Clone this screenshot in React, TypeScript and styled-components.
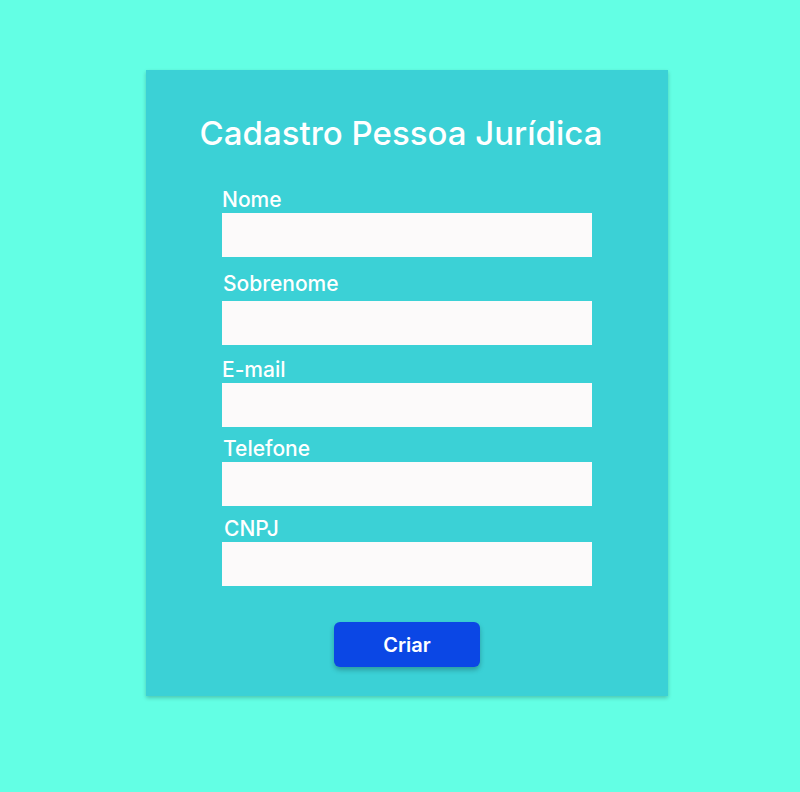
import React from "react";
import styled, { createGlobalStyle } from "styled-components";

const Global = createGlobalStyle`
  html, body { margin: 0; padding: 0; background: #63ffe4; }
  body { font-family: Inter, "Noto Sans", sans-serif; min-height: 792px; }
`;

const Page = styled.div`
  padding: 70px 0 0 146px;
`;

const Card = styled.form`
  box-sizing: border-box;
  width: 522px;
  height: 626px;
  background: #3bd1d6;
  box-shadow: 0 2px 4px rgba(0, 0, 0, 0.22);
  padding: 45px 76px 0 76px;
  display: flex;
  flex-direction: column;
`;

const Title = styled.h1`
  margin: 0 -48px 0 -60px;
  font-size: 33px;
  line-height: 36px;
  font-weight: 500;
  color: #ffffff;
  text-align: center;
  white-space: nowrap;
`;

const Field = styled.label<{ $top: number }>`
  display: flex;
  flex-direction: column;
  margin-top: ${(p) => p.$top}px;
`;

const LabelText = styled.span<{ $shift?: number; $gap?: number }>`
  font-size: 21px;
  line-height: 22px;
  font-weight: 500;
  color: #ffffff;
  padding-left: ${(p) => p.$shift ?? 0}px;
  margin-bottom: ${(p) => p.$gap ?? 2}px;
`;

const Input = styled.input`
  box-sizing: border-box;
  width: 370px;
  height: 44px;
  border: none;
  outline: none;
  background: #fcfafa;
  margin: 0;
  padding: 0 10px;
  font-family: inherit;
  font-size: 16px;
`;

const Actions = styled.div`
  display: flex;
  justify-content: center;
  margin-top: 36px;
`;

const Button = styled.button`
  width: 146px;
  height: 45px;
  border: none;
  border-radius: 6px;
  background: #0b47e5;
  color: #ffffff;
  font-family: inherit;
  font-size: 20px;
  font-weight: 600;
  box-shadow: 0 3px 5px rgba(0, 0, 0, 0.25);
  cursor: pointer;
`;

const fields = [
  { label: "Nome", top: 38, shift: 0, gap: 2 },
  { label: "Sobrenome", top: 16, shift: 1, gap: 6 },
  { label: "E-mail", top: 14, shift: 0, gap: 2 },
  { label: "Telefone", top: 11, shift: 1, gap: 2 },
  { label: "CNPJ", top: 12, shift: 2, gap: 2 },
];

export default function App() {
  return (
    <>
      <Global />
      <Page>
        <Card onSubmit={(e) => e.preventDefault()}>
          <Title>Cadastro Pessoa Jurídica</Title>
          {fields.map((f) => (
            <Field key={f.label} $top={f.top}>
              <LabelText $shift={f.shift} $gap={f.gap}>
                {f.label}
              </LabelText>
              <Input type="text" />
            </Field>
          ))}
          <Actions>
            <Button type="submit">Criar</Button>
          </Actions>
        </Card>
      </Page>
    </>
  );
}
